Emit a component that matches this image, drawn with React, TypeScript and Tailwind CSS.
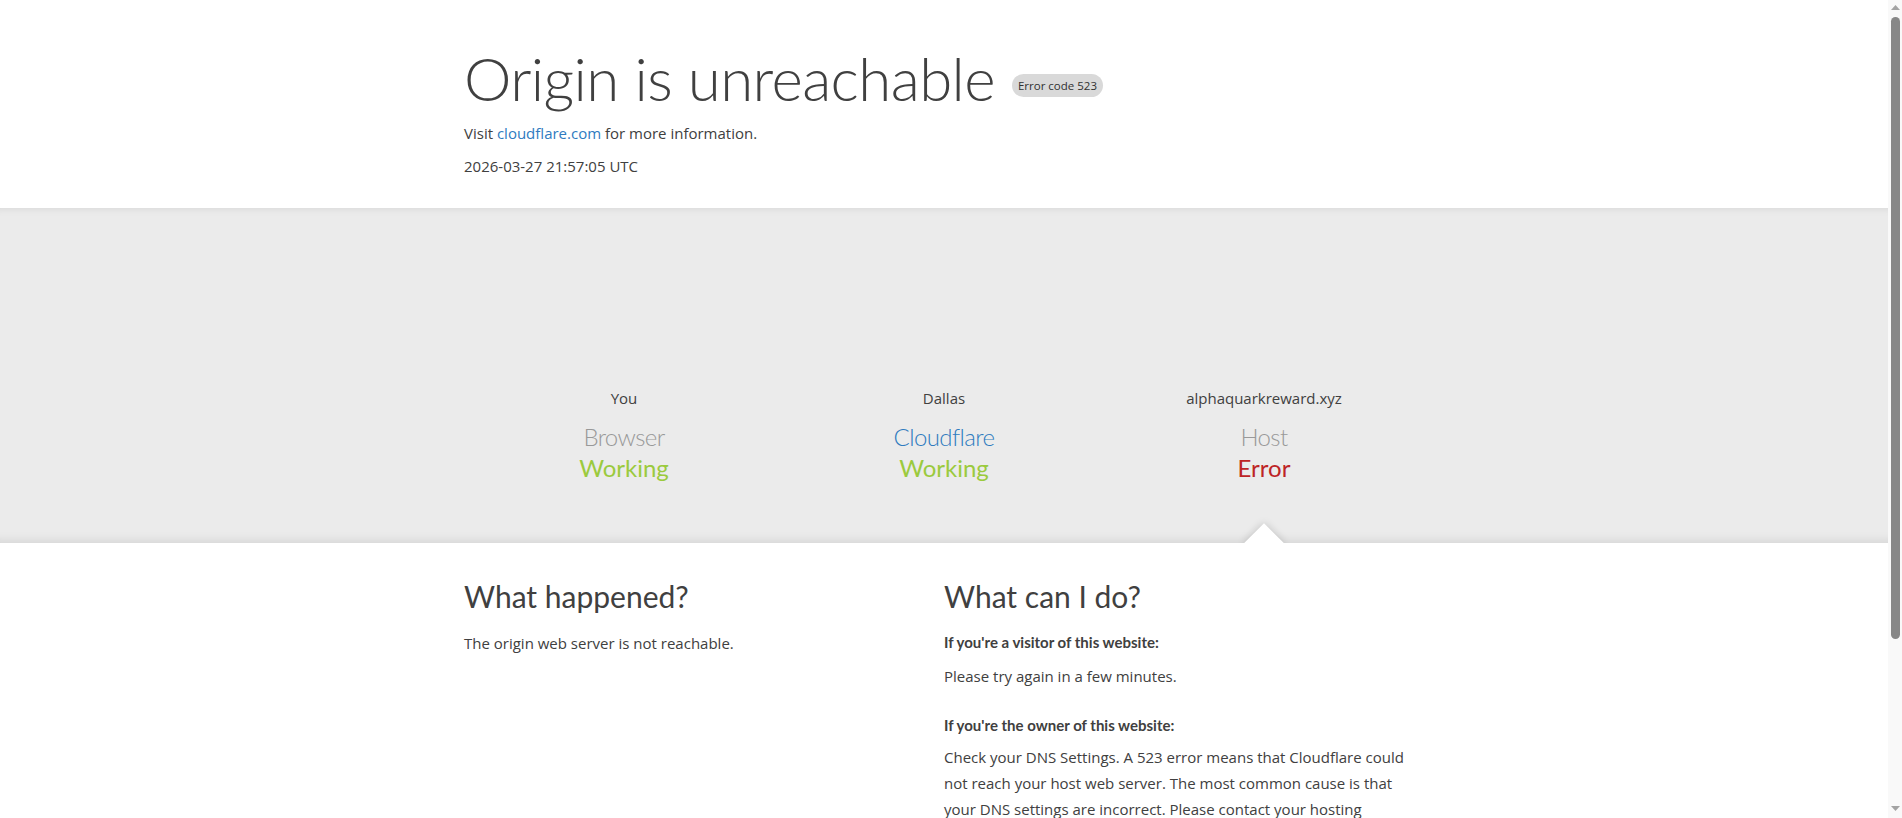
import React from "react";

type Hop = {
  place: string;
  name: string;
  status: string;
  nameClass: string;
  statusClass: string;
};

const HOPS: Hop[] = [
  { place: "You", name: "Browser", status: "Working", nameClass: "text-[#999999]", statusClass: "text-[#9bca3e]" },
  { place: "Dallas", name: "Cloudflare", status: "Working", nameClass: "text-[#2f7bbf]", statusClass: "text-[#9bca3e]" },
  { place: "alphaquarkreward.xyz", name: "Host", status: "Error", nameClass: "text-[#999999]", statusClass: "text-[#bd2426]" },
];

function Scrollbar() {
  return (
    <div className="fixed top-0 right-0 flex h-screen w-[14px] flex-col items-center bg-[#f9f9f9]">
      <svg className="mt-[5px] h-[5px] w-[9px]" viewBox="0 0 9 5">
        <path d="M4.5 0 9 5H0z" fill="#a3a3a3" />
      </svg>
      <div className="mt-[7px] ml-[1px] h-[622px] w-[9px] rounded-full bg-[#878787]" />
      <div className="flex-1" />
      <svg className="mb-[7px] h-[5px] w-[9px]" viewBox="0 0 9 5">
        <path d="M0 0h9L4.5 5z" fill="#a3a3a3" />
      </svg>
    </div>
  );
}

export default function App() {
  return (
    <div className="min-h-screen bg-white pr-[14px] font-['Open_Sans','Lato',sans-serif] text-[15px] text-[#404040] antialiased">
      {/* heading */}
      <header className="mx-auto w-[960px] pt-[42px] pb-[30px]">
        <div className="flex items-start">
          <h1 className="font-['Lato','Open_Sans',sans-serif] text-[60px] leading-[72px] font-light tracking-[-0.6px]">
            Origin is unreachable
          </h1>
          <span className="mt-[32px] ml-[17px] inline-flex h-[23px] items-center rounded-full bg-[#d9d9d9] px-[6px] text-[11.5px] text-[#313131]">
            Error code 523
          </span>
        </div>
        <p className="mt-[7px] leading-[24px]">
          Visit{" "}
          <a href="#" className="text-[#2f7bbf]">
            cloudflare.com
          </a>{" "}
          for more information.
        </p>
        <p className="mt-[9px] leading-[24px]">2026-03-27 21:57:05 UTC</p>
      </header>

      {/* request path */}
      <section className="bg-[#ebebeb] shadow-[inset_0_8px_8px_-8px_rgba(0,0,0,0.1),inset_0_-12px_12px_-12px_rgba(0,0,0,0.14)]">
        <div className="relative mx-auto grid w-[960px] grid-cols-3 pt-[178px] pb-[60px]">
          {HOPS.map((h) => (
            <div key={h.name} className="flex flex-col items-center text-center">
              <span className="leading-[24px]">{h.place}</span>
              <h3
                className={`mt-[11px] font-['Lato','Open_Sans',sans-serif] text-2xl leading-[31px] font-light tracking-[-0.6px] ${h.nameClass}`}
              >
                {h.name}
              </h3>
              <span className={`font-['Lato','Open_Sans',sans-serif] text-2xl leading-[31px] ${h.statusClass}`}>
                {h.status}
              </span>
            </div>
          ))}
          <div className="absolute bottom-[-14px] left-[786px] h-[28px] w-[28px] rotate-45 bg-white shadow-[0_0_8px_rgba(0,0,0,0.18)]" />
        </div>
      </section>

      {/* explanation */}
      <section className="relative bg-white">
        <div className="mx-auto grid w-[960px] grid-cols-2 pt-[34px] pb-12">
          <div className="pr-6">
            <h2 className="font-['Lato','Open_Sans',sans-serif] text-3xl leading-[38px] font-normal">What happened?</h2>
            <p className="mt-4 leading-[24px]">The origin web server is not reachable.</p>
          </div>
          <div>
            <h2 className="font-['Lato','Open_Sans',sans-serif] text-3xl leading-[38px] font-normal">What can I do?</h2>
            <h3 className="mt-[14px] font-['Lato','Open_Sans',sans-serif] leading-[26px] font-bold">
              If you're a visitor of this website:
            </h3>
            <p className="mt-2 leading-[26px]">Please try again in a few minutes.</p>
            <h3 className="mt-[23px] font-['Lato','Open_Sans',sans-serif] leading-[26px] font-bold">
              If you're the owner of this website:
            </h3>
            <p className="mt-[6px] leading-[26px]">
              Check your DNS Settings. A 523 error means that Cloudflare could not reach your host web server. The
              most common cause is that your DNS settings are incorrect. Please contact your hosting provider to
              confirm your origin IP and then make sure the correct IP is listed for your A record in your Cloudflare
              DNS Settings page.{" "}
              <a href="#" className="text-[#2f7bbf]">
                Additional troubleshooting information here.
              </a>
            </p>
          </div>
        </div>

        <footer className="mx-auto w-[960px] border-t border-[#d9d9d9] py-4 text-center text-[13px]">
          Cloudflare Ray ID: <strong className="font-semibold">9e3c1b7a2f4d8e51</strong> &bull; Your IP:{" "}
          <button className="text-[#2f7bbf]">Click to reveal</button> &bull; Performance &amp; security by{" "}
          <a href="#" className="text-[#2f7bbf]">
            Cloudflare
          </a>
        </footer>
      </section>

      <Scrollbar />
    </div>
  );
}
